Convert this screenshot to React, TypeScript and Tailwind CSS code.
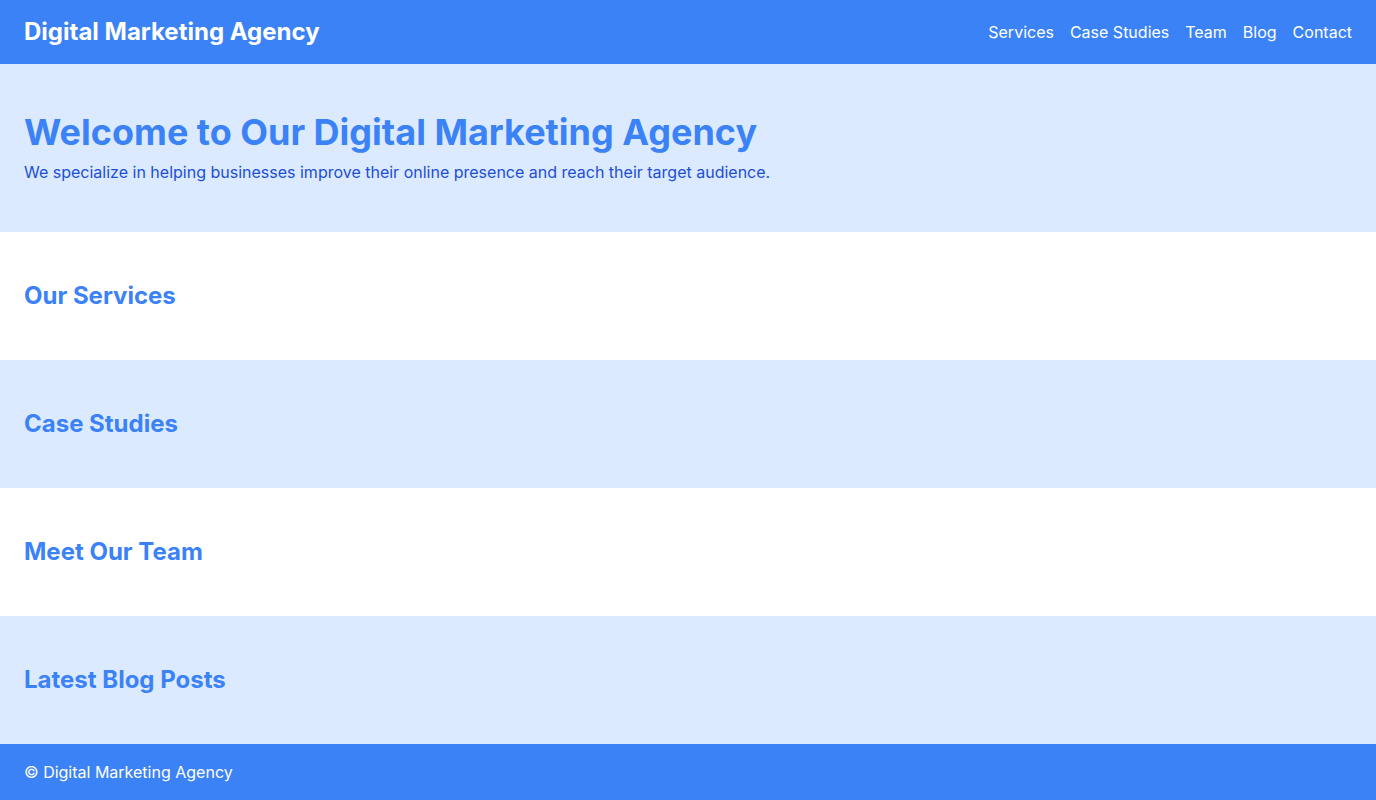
export default function App() {
  const sections = [
    { title: 'Our Services', bg: 'bg-white' },
    { title: 'Case Studies', bg: 'bg-[#dbeafe]' },
    { title: 'Meet Our Team', bg: 'bg-white' },
    { title: 'Latest Blog Posts', bg: 'bg-[#dbeafe]' },
  ];

  return (
    <div className="min-h-screen flex flex-col font-['Inter',sans-serif]">
      <header className="bg-[#3b82f6] text-white px-6 py-4 flex items-center justify-between">
        <h1 className="text-2xl font-bold">Digital Marketing Agency</h1>
        <nav className="flex gap-4 text-base">
          <a href="#">Services</a>
          <a href="#">Case Studies</a>
          <a href="#">Team</a>
          <a href="#">Blog</a>
          <a href="#">Contact</a>
        </nav>
      </header>

      <section className="bg-[#dbeafe] px-6 py-12">
        <h2 className="text-4xl font-bold text-[#3b82f6] mb-2">Welcome to Our Digital Marketing Agency</h2>
        <p className="text-base text-[#1d4ed8]">We specialize in helping businesses improve their online presence and reach their target audience.</p>
      </section>

      {sections.map((s) => (
        <section key={s.title} className={`${s.bg} px-6 py-12`}>
          <h2 className="text-2xl font-bold text-[#3b82f6]">{s.title}</h2>
        </section>
      ))}

      <footer className="bg-[#3b82f6] text-white px-6 py-4">
        <p>© Digital Marketing Agency</p>
      </footer>
    </div>
  );
}
